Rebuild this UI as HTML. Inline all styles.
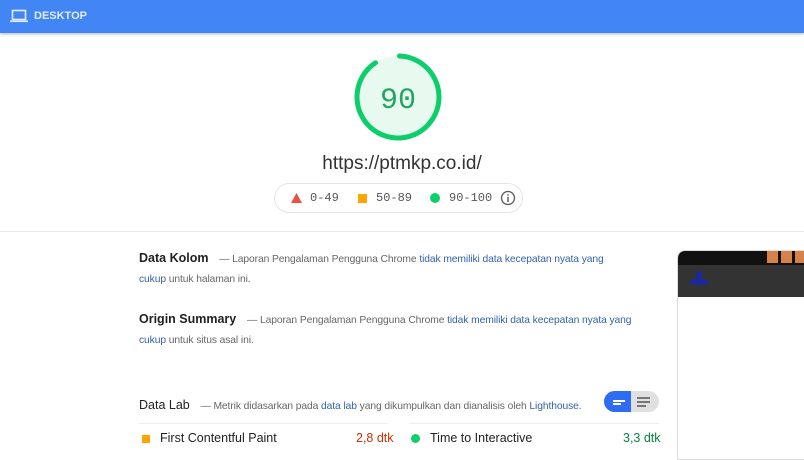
<!DOCTYPE html>
<html><head><meta charset="utf-8"><style>
*{margin:0;padding:0;box-sizing:border-box}
body{width:804px;height:452px;overflow:hidden;background:#fff;font-family:"Liberation Sans",Arial,sans-serif;position:relative;color:#212121}
.hdr{position:absolute;left:0;top:0;width:804px;height:33px;background:#4285f4;box-shadow:0 1px 3px rgba(0,0,0,.3)}
.hdr span{position:absolute;left:34px;top:10px;color:#e3ecfd;font-size:11px;font-weight:bold}
.abs{position:absolute}
.t{font-size:10.3px;color:#666;line-height:20px;white-space:nowrap;letter-spacing:-0.1px}
.t b{color:#212121;font-size:12.5px;margin-right:8px;letter-spacing:0}
.t a{color:#3462a8;text-decoration:none}
.mono{font-family:"Liberation Mono",monospace}
</style></head><body>
<div class="hdr">
<svg class="abs" style="left:10px;top:8px" width="18" height="16" viewBox="0 0 18 16"><rect x="2.5" y="2.5" width="13" height="9" fill="none" stroke="#e3ecfd" stroke-width="1.6"/><rect x="0" y="12.5" width="18" height="1.6" fill="#e3ecfd"/></svg>
<span>DESKTOP</span></div>
<svg class="abs" style="left:352px;top:51px" width="92" height="92" viewBox="0 0 92 92">
<circle cx="46" cy="46" r="41" fill="#e8faf0"/>
<circle cx="46" cy="46" r="41" fill="none" stroke="#0cce6b" stroke-width="5" stroke-linecap="round" stroke-dasharray="232 258" transform="rotate(-88 46 46)"/>
<text x="46" y="57" text-anchor="middle" font-family="Liberation Mono,monospace" font-size="30" fill="#23a55f">90</text></svg>
<div class="abs" style="left:0;width:804px;top:153px;text-align:center;font-size:19px;color:#333">https://ptmkp.co.id/</div>
<div class="abs" style="left:274px;top:183px;width:249px;height:30px;border:1px solid #e4e4e4;border-radius:15px"></div>
<svg class="abs" style="left:291px;top:193px" width="11" height="10"><polygon points="5.5,0 11,10 0,10" fill="#eb5044"/></svg>
<div class="abs mono" style="left:310px;top:191px;font-size:12px;color:#555">0-49</div>
<div class="abs" style="left:358px;top:194px;width:9px;height:9px;background:#ffa400"></div>
<div class="abs mono" style="left:376px;top:191px;font-size:12px;color:#555">50-89</div>
<div class="abs" style="left:430px;top:193px;width:10px;height:10px;border-radius:50%;background:#0cce6b"></div>
<div class="abs mono" style="left:449px;top:191px;font-size:12px;color:#555">90-100</div>
<svg class="abs" style="left:500px;top:190px" width="16" height="16"><circle cx="8" cy="8" r="6.5" fill="none" stroke="#555" stroke-width="1.3"/><rect x="7.3" y="7" width="1.4" height="5" fill="#555"/><rect x="7.3" y="4.2" width="1.4" height="1.4" fill="#555"/></svg>
<div class="abs" style="left:0;top:231px;width:804px;height:1px;background:#e8e8e8"></div>
<div class="abs t" style="left:139px;top:248px"><b>Data Kolom</b> — Laporan Pengalaman Pengguna Chrome <a>tidak memiliki data kecepatan nyata yang</a><br><a>cukup</a> untuk halaman ini.</div>
<div class="abs t" style="left:139px;top:309px"><b>Origin Summary</b> — Laporan Pengalaman Pengguna Chrome <a>tidak memiliki data kecepatan nyata yang</a><br><a>cukup</a> untuk situs asal ini.</div>
<div class="abs t" style="left:139px;top:395px"><b style="font-weight:normal">Data Lab</b> — Metrik didasarkan pada <a>data lab</a> yang dikumpulkan dan dianalisis oleh <a>Lighthouse</a>.</div>
<div class="abs" style="left:604px;top:391px;width:55px;height:21px;border-radius:11px;background:#e0e0e0;overflow:hidden"><div style="width:27px;height:21px;background:#2f6cf4"></div></div>
<div class="abs" style="left:613px;top:400px;width:12px;height:2px;background:#fff"></div>
<div class="abs" style="left:613px;top:403px;width:8px;height:2px;background:#fff"></div>
<div class="abs" style="left:637px;top:397px;width:13px;height:1.5px;background:#777"></div>
<div class="abs" style="left:637px;top:401px;width:13px;height:1.5px;background:#777"></div>
<div class="abs" style="left:637px;top:405px;width:9px;height:1.5px;background:#777"></div>
<div class="abs" style="left:139px;top:423px;width:249px;height:1px;background:#eee"></div>
<div class="abs" style="left:409px;top:423px;width:250px;height:1px;background:#eee"></div>
<div class="abs" style="left:142px;top:435px;width:8px;height:8px;background:#ffa400"></div>
<div class="abs" style="left:160px;top:431px;font-size:12.5px">First Contentful Paint</div>
<div class="abs" style="left:356px;top:431px;font-size:12.5px;color:#c33300">2,8 dtk</div>
<div class="abs" style="left:411px;top:434px;width:9px;height:9px;border-radius:50%;background:#0cce6b"></div>
<div class="abs" style="left:430px;top:431px;font-size:12.5px">Time to Interactive</div>
<div class="abs" style="left:623px;top:431px;font-size:12.5px;color:#0b8043">3,3 dtk</div>
<div class="abs" style="left:677px;top:250px;width:130px;height:210px;border:1px solid #ddd;border-radius:8px 0 0 0;overflow:hidden">
<div style="height:14px;background:#111"></div>
<div style="height:32px;background:#333"></div>
</div>
<div class="abs" style="left:767px;top:251px;width:11px;height:12px;background:#d4814a"></div>
<div class="abs" style="left:781px;top:251px;width:11px;height:12px;background:#d4814a"></div>
<div class="abs" style="left:795px;top:251px;width:9px;height:12px;background:#d4814a"></div>
<svg class="abs" style="left:688px;top:270px" width="22" height="18"><polygon points="11,0 14,3 14,15 8,15 8,3" fill="#1a2a9a"/><ellipse cx="11" cy="12" rx="10" ry="3" fill="#1a2a9a"/></svg>
</body></html>
